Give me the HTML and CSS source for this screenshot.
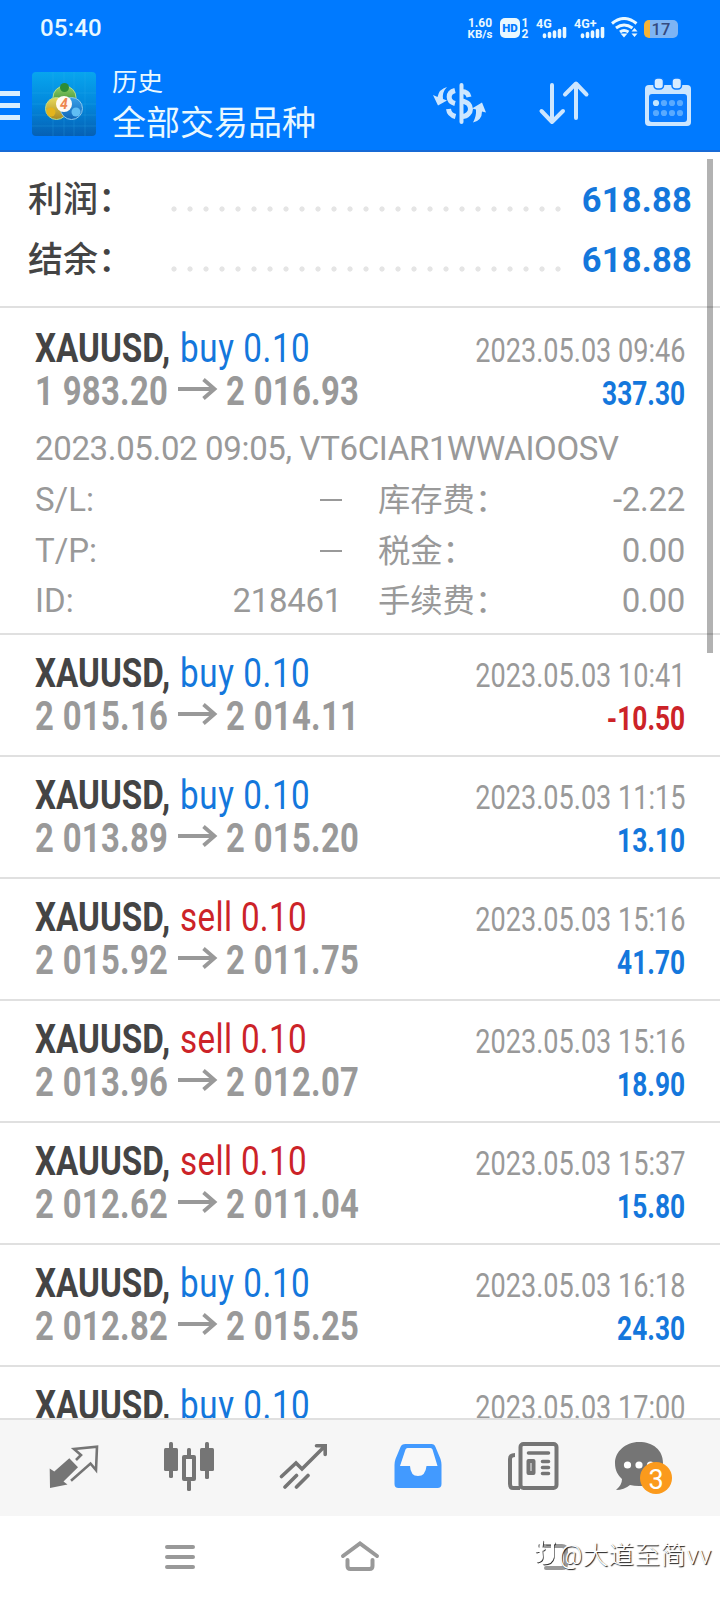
FILE: index.html
```html
<!DOCTYPE html>
<html lang="zh-CN">
<head>
<meta charset="utf-8">
<title>历史</title>
<link rel="stylesheet" href="styles.css">
</head>
<body>
<div class="screen">
  <header class="header">
    <div class="status">
      <span class="clock">05:40</span>
      <div class="status-icons">
        <div class="rate"><span>1.60</span><span>KB/s</span></div>
        <div class="hd">HD</div>
        <div class="sims"><span>1</span><span>2</span></div>
        <div class="signal"><span>4G</span>
          <svg width="25" height="12" viewBox="0 0 25 12"><path d="M2.500 8v1.500M7.500 6.500v3M12.500 5v4.500M17.500 3.500v6M22.500 1.500v8"/></svg>
        </div>
        <div class="signal second"><span>4G+</span>
          <svg width="25" height="12" viewBox="0 0 25 12"><path d="M2.500 8v1.500M7.500 6.500v3M12.500 5v4.500M17.500 3.500v6M22.500 1.500v8"/></svg>
        </div>
        <svg class="wifi" width="27" height="22" viewBox="0 0 27 22"><g fill="none" stroke="#e9f8ff" stroke-width="3"><path d="M1 6.500Q13 -3.500 25.500 6.500M5 11q8-6 16.500 0M9 15q4-3 8.500 0"/></g><path fill="#e9f8ff" d="M9.500 16.500h7L13 20.500zM20.500 14.500l3-3.500 3 3.500zM20.500 16.500l3 3.500 3-3.500z"/></svg>
        <div class="battery"><span>17</span></div>
      </div>
    </div>
    <div class="toolbar">
      <div class="menu"><i></i><i></i><i></i></div>
      <svg class="logo" width="64" height="64" viewBox="0 0 64 64">
        <defs>
          <linearGradient id="bg" x1="0" y1="0" x2="0" y2="1"><stop offset="0" stop-color="#08a5ee"/><stop offset=".5" stop-color="#0288dc"/><stop offset="1" stop-color="#0660b4"/></linearGradient>
          <linearGradient id="gr" x1="0" y1="0" x2="0" y2="1"><stop offset="0" stop-color="#8fd062"/><stop offset="1" stop-color="#267a2e"/></linearGradient>
          <linearGradient id="ye" x1="0" y1="0" x2="0" y2="1"><stop offset="0" stop-color="#e8d85a"/><stop offset="1" stop-color="#a98a22"/></linearGradient>
          <linearGradient id="bl" x1="0" y1="0" x2="0" y2="1"><stop offset="0" stop-color="#3aa0e8"/><stop offset="1" stop-color="#1166b8"/></linearGradient>
        </defs>
        <rect width="64" height="64" rx="4" fill="url(#bg)"/>
        <path d="M21 0v64M32 0v64M42 0v64M53 0v64M0 21h64M0 32h64M0 43h64M0 54h64" stroke="#36b5f0" stroke-opacity=".3" stroke-width=".8"/>
        <g stroke="#b4dc90" stroke-width="1"><circle cx="32.500" cy="25.500" r="11.500" fill="url(#gr)"/><circle cx="24.500" cy="36.500" r="11" fill="url(#ye)"/><circle cx="39.500" cy="36.500" r="11" fill="url(#bl)" stroke="#8bc8ee"/></g>
        <circle cx="32.500" cy="15.500" r="4.500" fill="#2d8c36"/><circle cx="19" cy="40" r="4.500" fill="#e4b41c"/><circle cx="44" cy="40" r="4.500" fill="#60bdf4"/>
        <circle cx="32" cy="32" r="8" fill="#fffaf4"/><text class="logo-number" x="32" y="37">4</text>
      </svg>
      <div class="titles"><div class="subtitle">历史</div><div class="title">全部交易品种</div></div>
      <svg class="tool money" width="54" height="44" viewBox="0 0 54 44" fill="none" stroke="#cce6ff" stroke-width="4">
        <path d="M28.500 4v37" stroke-linecap="round"/><path d="M36 16c-1-5-5-5.500-7.500-5.500M22 9.500c-8 2-7.500 11 0 13M28.500 20c7 1 9 5 9 8s-3 8-9 7.500M15.500 28c.5 4 3 6.500 7 7.500" stroke-width="5"/>
        <path d="M14 6Q6 8 4.500 16L0 14l5 10.500 9-5-4-1.500Q9 11 14 6zM40 41.500q9-2 9-11l4 1-4-10-10 6 4 1q.5 7-3 13z" fill="#cce6ff" stroke="none"/>
      </svg>
      <svg class="tool sort" width="52" height="46" viewBox="0 0 52 46" fill="none" stroke="#cce6ff" stroke-width="4" stroke-linecap="round" stroke-linejoin="round"><path d="M14 5v37M3.500 31L14 42l11-11M38 38V4M27 14.500L38 3.500l10.500 11"/></svg>
      <svg class="tool calendar" width="48" height="50" viewBox="0 0 48 50">
        <rect x="1" y="8" width="46" height="41" rx="4" fill="#cce6ff"/><rect x="5" y="17" width="38" height="28" rx="3" fill="#0a7cff"/>
        <g fill="#d8ecff" stroke="#0a7cff" stroke-width="1.500"><rect x="10" y="1" width="9.500" height="11" rx="3.500"/><rect x="28" y="1" width="9.500" height="11" rx="3.500"/></g>
        <g fill="#59aaff"><circle cx="20" cy="26" r="3.100"/><circle cx="28" cy="26" r="3.100"/><circle cx="36" cy="26" r="3.100"/><circle cx="12" cy="36" r="3.100"/><circle cx="20" cy="36" r="3.100"/><circle cx="28" cy="36" r="3.100"/><circle cx="36" cy="36" r="3.100"/></g><circle cx="12" cy="26" r="3.100" fill="#c4e6ff"/>
      </svg>
    </div>
  </header>

  <main class="content">
    <section class="summary">
      <div class="sum-row"><span class="sum-label">利润：</span><span class="dots"></span><span class="sum-value">618.88</span></div>
      <div class="sum-row"><span class="sum-label">结余：</span><span class="dots"></span><span class="sum-value">618.88</span></div>
    </section>
    <article class="deal expanded">
      <div class="line"><div class="symbol"><b>XAUUSD,</b> <span class="side buy">buy 0.10</span></div><div class="date">2023.05.03 09:46</div></div>
      <div class="line prices"><div class="from">1 983.20</div><svg class="arrow" viewBox="0 0 40 22"><path d="M0 11h36M25.500 1.500L36.500 11 25.500 20.500"/></svg><div class="to">2 016.93</div><div class="profit buy">337.30</div></div>
      <div class="comment">2023.05.02 09:05, VT6CIAR1WWAIOOSV</div>
      <div class="details">
        <span>S/L:</span><span class="dash"></span><span class="cjk">库存费：</span><span class="num">-2.22</span>
        <span>T/P:</span><span class="dash"></span><span class="cjk">税金：</span><span class="num">0.00</span>
        <span>ID:</span><span class="num">218461</span><span class="cjk">手续费：</span><span class="num">0.00</span>
      </div>
    </article>
    <article class="deal">
      <div class="line"><div class="symbol"><b>XAUUSD,</b> <span class="side buy">buy 0.10</span></div><div class="date">2023.05.03 10:41</div></div>
      <div class="line prices"><div class="from">2 015.16</div><svg class="arrow" viewBox="0 0 40 22"><path d="M0 11h36M25.500 1.500L36.500 11 25.500 20.500"/></svg><div class="to">2 014.11</div><div class="profit sell">-10.50</div></div>
    </article>
    <article class="deal">
      <div class="line"><div class="symbol"><b>XAUUSD,</b> <span class="side buy">buy 0.10</span></div><div class="date">2023.05.03 11:15</div></div>
      <div class="line prices"><div class="from">2 013.89</div><svg class="arrow" viewBox="0 0 40 22"><path d="M0 11h36M25.500 1.500L36.500 11 25.500 20.500"/></svg><div class="to">2 015.20</div><div class="profit buy">13.10</div></div>
    </article>
    <article class="deal">
      <div class="line"><div class="symbol"><b>XAUUSD,</b> <span class="side sell">sell 0.10</span></div><div class="date">2023.05.03 15:16</div></div>
      <div class="line prices"><div class="from">2 015.92</div><svg class="arrow" viewBox="0 0 40 22"><path d="M0 11h36M25.500 1.500L36.500 11 25.500 20.500"/></svg><div class="to">2 011.75</div><div class="profit buy">41.70</div></div>
    </article>
    <article class="deal">
      <div class="line"><div class="symbol"><b>XAUUSD,</b> <span class="side sell">sell 0.10</span></div><div class="date">2023.05.03 15:16</div></div>
      <div class="line prices"><div class="from">2 013.96</div><svg class="arrow" viewBox="0 0 40 22"><path d="M0 11h36M25.500 1.500L36.500 11 25.500 20.500"/></svg><div class="to">2 012.07</div><div class="profit buy">18.90</div></div>
    </article>
    <article class="deal">
      <div class="line"><div class="symbol"><b>XAUUSD,</b> <span class="side sell">sell 0.10</span></div><div class="date">2023.05.03 15:37</div></div>
      <div class="line prices"><div class="from">2 012.62</div><svg class="arrow" viewBox="0 0 40 22"><path d="M0 11h36M25.500 1.500L36.500 11 25.500 20.500"/></svg><div class="to">2 011.04</div><div class="profit buy">15.80</div></div>
    </article>
    <article class="deal">
      <div class="line"><div class="symbol"><b>XAUUSD,</b> <span class="side buy">buy 0.10</span></div><div class="date">2023.05.03 16:18</div></div>
      <div class="line prices"><div class="from">2 012.82</div><svg class="arrow" viewBox="0 0 40 22"><path d="M0 11h36M25.500 1.500L36.500 11 25.500 20.500"/></svg><div class="to">2 015.25</div><div class="profit buy">24.30</div></div>
    </article>
    <article class="deal">
      <div class="line"><div class="symbol"><b>XAUUSD,</b> <span class="side buy">buy 0.10</span></div><div class="date">2023.05.03 17:00</div></div>
    </article>
    <div class="scrollbar"></div>
  </main>

  <nav class="tabs">
    <svg width="50" height="50" viewBox="0 0 50 50"><path fill="#757575" d="M20.300 18.300l8.700 9L14.500 41.500l4 3L1 48 .7 28.500l4.600 3z"/><path d="M27 20l5-5-7-6 23-2.300L47 30l-5.500-6.500L22 40.700" fill="none" stroke="#757575" stroke-width="2.600"/></svg>
    <svg width="52" height="52" viewBox="0 0 52 52"><g fill="#757575"><rect x="1" y="8" width="14" height="23" rx="1.500"/><rect x="6" y="2" width="4" height="36" rx="1.500"/><rect x="37" y="8" width="14" height="23" rx="1.500"/><rect x="42" y="2" width="4" height="37" rx="1.500"/><rect x="24" y="8" width="4" height="8" rx="1.500"/><rect x="24" y="40" width="4" height="11" rx="1.500"/></g><path d="M21 17h10v22H21z" fill="none" stroke="#757575" stroke-width="4" stroke-linejoin="round"/></svg>
    <svg width="50" height="50" viewBox="0 0 50 50" fill="none" stroke="#757575" stroke-width="3.600" stroke-linecap="round"><path d="M2.500 36.500L17 23l6 6L45 7M37.500 5.800h8.700v8.700M6 47l11.500-11.500M17.500 47l11.500-11.500"/></svg>
    <svg width="50" height="50" viewBox="0 0 50 50"><path d="M12.500 4h26q3 0 4 3l5 12q1 3 1 6v19q0 4-4 4h-39q-4 0-4-4V25q0-3 1-6L7.500 7q1-3 5-3z" fill="#429aff"/><path d="M14.500 8h23q1.500 0 2 1.500l5 16.500h-11q-1 10-8.500 10T17 26H7l5.500-16.500Q13 8 14.500 8z" fill="#f8f8f8"/></svg>
    <svg width="52" height="50" viewBox="0 0 52 50"><g fill="none" stroke="#757575" stroke-width="4"><rect x="13.500" y="4" width="36" height="44" rx="3"/><path d="M13 48H6q-3 0-3-4V19q0-4 5-4"/></g><path d="M21.500 13h20M35.500 21.500h6M35.500 27.500h6M35.500 33.500h6" stroke="#757575" stroke-width="3.600" stroke-linecap="round"/><path d="M21.500 21h5v12h-5z" fill="none" stroke="#757575" stroke-width="4" stroke-linejoin="round"/></svg>
    <div class="chat"><svg width="50" height="50" viewBox="0 0 50 50"><path d="M25 2C11 2 1 12 1 23c0 8 3 12 7 16q0 6-6 11 8 0 14-5 4 1 9 1c14 0 24-10 24-23S39 2 25 2z" fill="#757575"/><g fill="#fff"><circle cx="13.500" cy="25" r="3.600"/><circle cx="25" cy="25" r="3.600"/><circle cx="36.500" cy="25" r="3.600"/></g></svg><span class="badge">3</span></div>
  </nav>

  <footer class="system">
    <svg width="30" height="26" viewBox="0 0 30 26"><path d="M2 3h26M2 13h26M2 23h26"/></svg>
    <svg width="40" height="32" viewBox="0 0 40 32"><path d="M3 16L20 3.500 37 16M7.500 20v6q0 3 3 3h19q3 0 3-3v-6"/></svg>
    <svg width="40" height="30" viewBox="0 0 40 30"><path d="M7 4h22q4 0 4 4v14q0 4-4 4H13"/></svg>
    <div class="watermark"><svg width="24" height="28" viewBox="0 0 24 28"><g fill="none" stroke-linecap="round"><path stroke="#333" stroke-width="2.800" d="M3.300 14l7-2M8.800 4Q7 12 8.300 20q0 3-4 4M12.800 6h8M19.200 6v14q-1 6-9 6"/><path stroke="#fff" stroke-width="3" d="M2.500 13l7-2M8 3q-2 8-.5 16q0 3-4 4M12 5h8M18.500 5v14q-1 6-9 6"/></g></svg><span>@大道至简vv</span></div>
  </footer>
</div>
</body>
</html>
```

FILE: styles.css
```css
* { box-sizing: border-box; }
body { margin: 0; background: #fff; font-family: Roboto, "Noto Sans CJK SC", sans-serif; }
svg { display: block; flex: none; }
.screen { width: 720px; height: 1600px; display: flex; flex-direction: column; overflow: hidden; }

.header { height: 152px; flex: none; background: #007aff; border-bottom: 2px solid #176ad6; color: #e9f8ff; }
.status { height: 56px; display: flex; justify-content: space-between; padding: 0 40px; }
.clock { font-size: 24px; font-weight: 500; line-height: 56px; letter-spacing: .2px; }
.status-icons { display: flex; align-items: flex-start; padding-top: 18px; }
.rate { width: 26px; display: flex; flex-direction: column; align-items: center; font-size: 11.500px; line-height: 11px; font-weight: 700; white-space: nowrap; }
.rate span:first-child { font-size: 12px; }
.hd { width: 20px; height: 20px; margin-left: 7px; border-radius: 5px; background: #e9f8ff; color: #007aff; font-size: 11.500px; line-height: 20px; font-weight: 900; text-align: center; }
.sims { width: 8px; margin-left: 1px; display: flex; flex-direction: column; font-size: 12px; line-height: 11px; font-weight: 700; text-align: center; }
.signal { width: 30px; height: 22px; margin-left: 8px; font-size: 12.500px; line-height: 11px; font-weight: 700; display: flex; flex-direction: column; }
.signal span { margin-left: -1px; }
.signal svg { align-self: flex-end; margin-top: -2px; }
.signal path { fill: none; stroke: #e9f8ff; stroke-width: 3.6; stroke-linecap: round; }
.wifi { margin-left: 6px; margin-top: -1px; }
.battery { width: 34px; height: 18px; margin: 2px 2px 0 6px; border-radius: 5px; background: linear-gradient(90deg, #f5b335 6px, #7db4f4 6px); color: #344a80; font-size: 16.500px; line-height: 19px; font-weight: 500; text-align: center; }

.toolbar { height: 94px; display: flex; align-items: flex-start; }
.menu { width: 20px; display: flex; flex-direction: column; gap: 7px; padding-top: 35px; }
.menu i { height: 5px; background: #d9efff; }
.logo { margin: 16px 0 0 12px; }
.logo-number { font-size: 14px; font-weight: 700; font-style: italic; fill: #ed8750; text-anchor: middle; }
.titles { width: 337px; padding: 7px 0 0 16px; font-family: "Noto Sans CJK SC", sans-serif; font-weight: 400; }
.subtitle { font-size: 25.500px; line-height: 34px; }
.title { font-size: 34px; line-height: 48px; }
.tool.money { margin-top: 25px; }
.tool.sort { margin: 24px 0 0 51px; }
.tool.calendar { margin: 21px 0 0 54px; }

.content { flex: 1; min-height: 0; overflow: hidden; position: relative; }
.summary { height: 156px; padding: 16px 28px 0; border-bottom: 2px solid #e0e0e0; }
.sum-row { height: 60px; display: flex; align-items: center; }
.sum-label { width: 138px; font: 500 35px/58px "Noto Sans CJK SC", sans-serif; color: #444; white-space: nowrap; margin-top: -3px; }
.dots { width: 400px; height: 16px; margin-top: 22px; background: radial-gradient(circle, #e5e5e5 2.200px, transparent 3px) 0 0 / 16px 16px; }
.sum-value { margin-left: auto; font-size: 34.500px; font-weight: 700; color: #1477dc; line-height: 60px; padding-top: 4px; letter-spacing: .2px; }

.deal { height: 122px; padding: 17px 35px 0; border-bottom: 2px solid #e0e0e0; }
.deal.expanded { height: 327px; padding-top: 19px; }
.line { height: 44px; display: flex; align-items: baseline; line-height: 44px; white-space: nowrap; }
.line.prices { height: 42px; line-height: 42px; }
.symbol { width: 200px; font-size: 40px; transform: scaleX(.83); transform-origin: left; color: #444; }
.side { margin-left: 2px; letter-spacing: .7px; }
.buy { color: #1477dc; }
.sell { color: #cc2328; }
.side.sell { letter-spacing: .4px; }
.date { margin-left: auto; font-size: 33.300px; color: #999; transform: scaleX(.813); transform-origin: right; }
.from, .to { width: 143px; font-size: 40px; font-weight: 700; color: #999; transform: scaleX(.82); transform-origin: left; letter-spacing: .4px; }
.arrow { width: 40px; height: 22px; align-self: flex-start; margin: 7px 8px 0 0; }
.arrow path { fill: none; stroke: #999; stroke-width: 3.800; }
.profit { margin-left: auto; font-size: 33.300px; font-weight: 700; transform: scaleX(.79); transform-origin: right; }
.comment { height: 50px; margin-top: 11px; margin-bottom: 1px; font-size: 33px; line-height: 50px; font-weight: 400; letter-spacing: -.35px; color: #999; white-space: nowrap; }
.details { display: grid; grid-template-columns: 90px 217px 110px 1fr; grid-auto-rows: 50.600px; align-items: center; font-size: 33px; line-height: 50px; font-weight: 400; color: #999; white-space: nowrap; }
.cjk { padding-left: 36px; font-family: "Noto Sans CJK SC", sans-serif; font-size: 32.300px; line-height: 46px; margin-top: -6px; }
.num { text-align: right; letter-spacing: -.3px; }
.dash { justify-self: end; width: 22px; height: 2px; background: #999; }
.scrollbar { position: absolute; left: 707px; top: 7px; width: 6px; height: 494px; background: rgba(0, 0, 0, .3); }

.tabs { height: 98px; flex: none; display: flex; gap: 64px; padding: 20px 0 0 49px; border-top: 2px solid #e0e0e0; background: #f6f6f6; }
.chat { position: relative; width: 58px; margin-left: -9px; }
.badge { position: absolute; left: 26px; top: 22px; width: 32px; height: 32px; border-radius: 50%; background: #fb9a1c; color: #fff; font-size: 27px; line-height: 37px; text-align: center; }

.system { height: 84px; flex: none; position: relative; display: flex; align-items: flex-start; padding: 28px 0 0 165px; background: #fff; }
.system > svg { fill: none; stroke: #999; stroke-width: 4; stroke-linecap: round; }
.system > svg:nth-child(2) { margin: -4px 0 0 145px; }
.system > svg:nth-child(3) { margin: -2px 0 0 153px; }
.watermark { position: absolute; left: 534px; top: 22px; display: flex; color: #fff; font: 300 25.500px/34px Roboto, "Noto Sans CJK SC", sans-serif; white-space: nowrap; letter-spacing: .4px; text-shadow: 1px 1px 1px #111; }
.watermark span { margin-left: 1px; }
```
